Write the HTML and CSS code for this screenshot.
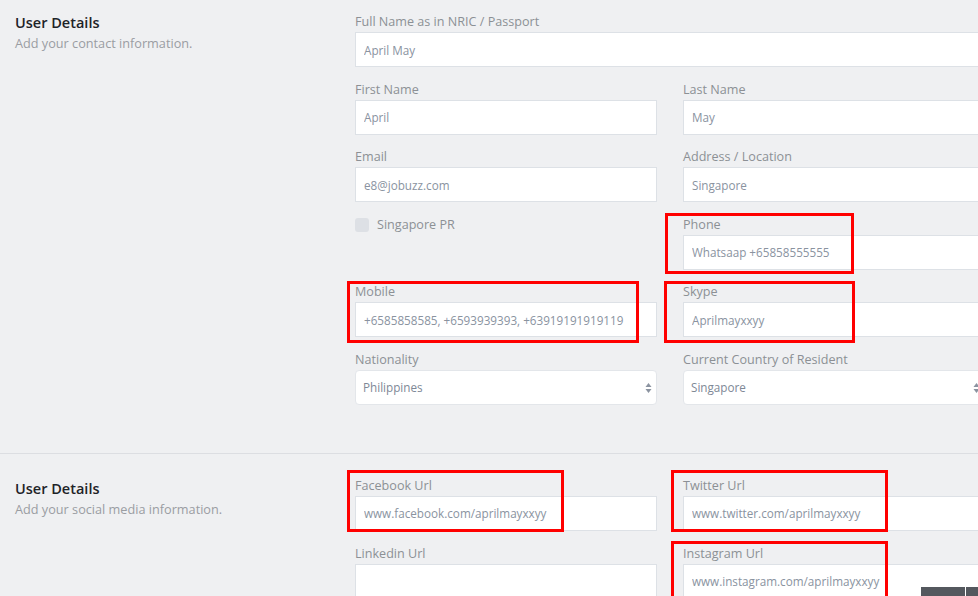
FILE: index.html
```html
<!DOCTYPE html>
<html>
<head>
    <meta charset="utf-8">
    <title>User Details</title>
    <meta name="viewport" content="width=device-width, initial-scale=1">
    <link rel="stylesheet" href="styles.css">
</head>
<body>
    <div class="page">
        <section class="section section-contact">
            <div class="section-info">
                <h2>User Details</h2>
                <p>Add your contact information.</p>
            </div>
            <div class="form-grid">
                <div class="field span-2">
                    <label>Full Name as in NRIC / Passport</label>
                    <input type="text" value="April May">
                </div>
                <div class="field">
                    <label>First Name</label>
                    <input type="text" value="April">
                </div>
                <div class="field">
                    <label>Last Name</label>
                    <input type="text" value="May">
                </div>
                <div class="field">
                    <label>Email</label>
                    <input type="text" value="e8@jobuzz.com">
                </div>
                <div class="field">
                    <label>Address / Location</label>
                    <input type="text" value="Singapore">
                </div>
                <div class="field check-field">
                    <span class="checkbox"></span>
                    <span class="check-label">Singapore PR</span>
                </div>
                <div class="field">
                    <label>Phone</label>
                    <input type="text" value="Whatsaap +65858555555">
                </div>
                <div class="field">
                    <label>Mobile</label>
                    <input type="text" value="+6585858585, +6593939393, +63919191919119">
                </div>
                <div class="field">
                    <label>Skype</label>
                    <input type="text" value="Aprilmayxxyy">
                </div>
                <div class="field">
                    <label>Nationality</label>
                    <div class="select">
                        <span>Philippines</span>
                        <svg class="select-arrows" width="7" height="12" viewBox="0 0 7 12"><path d="M3.5 1 L6.5 5 L0.5 5 Z M3.5 11 L6.5 7 L0.5 7 Z" fill="#8b93a0"/></svg>
                    </div>
                </div>
                <div class="field">
                    <label>Current Country of Resident</label>
                    <div class="select">
                        <span>Singapore</span>
                        <svg class="select-arrows" width="7" height="12" viewBox="0 0 7 12"><path d="M3.5 1 L6.5 5 L0.5 5 Z M3.5 11 L6.5 7 L0.5 7 Z" fill="#8b93a0"/></svg>
                    </div>
                </div>
            </div>
        </section>

        <div class="divider"></div>

        <section class="section section-social">
            <div class="section-info">
                <h2>User Details</h2>
                <p>Add your social media information.</p>
            </div>
            <div class="form-grid">
                <div class="field">
                    <label>Facebook Url</label>
                    <input type="text" value="www.facebook.com/aprilmayxxyy">
                </div>
                <div class="field">
                    <label>Twitter Url</label>
                    <input type="text" value="www.twitter.com/aprilmayxxyy">
                </div>
                <div class="field">
                    <label>Linkedin Url</label>
                    <input type="text" value="">
                </div>
                <div class="field">
                    <label>Instagram Url</label>
                    <input type="text" value="www.instagram.com/aprilmayxxyy">
                </div>
            </div>
        </section>

        <!-- highlight marks drawn over the form -->
        <div class="mark mark-phone"></div>
        <div class="mark mark-skype"></div>
        <div class="mark mark-mobile"></div>
        <div class="mark mark-facebook"></div>
        <div class="mark mark-twitter"></div>
        <div class="mark mark-instagram"></div>

        <div class="corner-bar">
            <span class="corner-btn"></span>
            <span class="corner-btn small"></span>
        </div>
    </div>
</body>
</html>
```

FILE: styles.css
```css
* {
    margin: 0;
    padding: 0;
    box-sizing: border-box;
}

html,
body {
    width: 100%;
    height: 100%;
    overflow: hidden;
    background: #eff0f2;
    font-family: "Open Sans", "Liberation Sans", sans-serif;
}

.page {
    position: relative;
    width: 978px;
    height: 596px;
    overflow: hidden;
}

.section {
    display: flex;
}

.section-contact {
    padding: 13px 0 48px;
}

.section-social {
    padding: 23px 0 0;
}

.section-info {
    width: 355px;
    flex-shrink: 0;
    padding-left: 15px;
}

.section-social .section-info {
    padding-top: 2px;
}

.section-info h2 {
    font-size: 14.5px;
    font-weight: 600;
    line-height: 20px;
    color: #1e2328;
}

.section-info p {
    font-size: 12.7px;
    line-height: 20px;
    color: #9a9da2;
}

.form-grid {
    display: grid;
    grid-template-columns: 302px 302px;
    column-gap: 26px;
    row-gap: 13.6px;
    flex-shrink: 0;
}

.span-2 {
    grid-column: span 2;
}

.field label {
    display: block;
    font-size: 12.6px;
    line-height: 17px;
    margin-bottom: 2px;
    color: #8c9095;
}

.field input {
    display: block;
    width: 100%;
    height: 35px;
    border: 1px solid #dde1e6;
    background: #fff;
    padding: 0 8px;
    font-family: "Open Sans", "Liberation Sans", sans-serif;
    font-size: 11.7px;
    color: #8a939f;
    outline: none;
}

.check-field {
    display: flex;
    align-items: center;
    height: 18px;
}

.checkbox {
    width: 14px;
    height: 14px;
    border-radius: 3px;
    background: #dde0e5;
    margin-right: 8px;
}

.check-label {
    font-size: 12.6px;
    color: #8c9095;
}

.select {
    position: relative;
    display: flex;
    align-items: center;
    height: 35px;
    background: #fff;
    border: 1px solid #e3e6ea;
    border-radius: 4px;
    padding: 0 7px;
    font-size: 11.7px;
    color: #7e8896;
}

.select-arrows {
    position: absolute;
    right: 4px;
    top: 11px;
}

.divider {
    height: 1px;
    background: #dcdee2;
}

/* red highlight boxes */
.mark {
    position: absolute;
    border: 3px solid #f00;
}

.mark-phone {
    left: 665px;
    top: 213px;
    width: 189px;
    height: 61px;
}

.mark-skype {
    left: 664px;
    top: 281px;
    width: 191px;
    height: 62px;
}

.mark-mobile {
    left: 347px;
    top: 281px;
    width: 292px;
    height: 62px;
}

.mark-facebook {
    left: 347px;
    top: 470px;
    width: 217px;
    height: 62px;
}

.mark-twitter {
    left: 671px;
    top: 470px;
    width: 217px;
    height: 62px;
}

.mark-instagram {
    left: 671px;
    top: 541px;
    width: 217px;
    height: 80px;
}

.corner-bar {
    position: absolute;
    left: 921px;
    top: 587px;
    display: flex;
    gap: 1px;
}

.corner-btn {
    width: 44px;
    height: 20px;
    background: #54585e;
}

.corner-btn.small {
    width: 20px;
}
```
